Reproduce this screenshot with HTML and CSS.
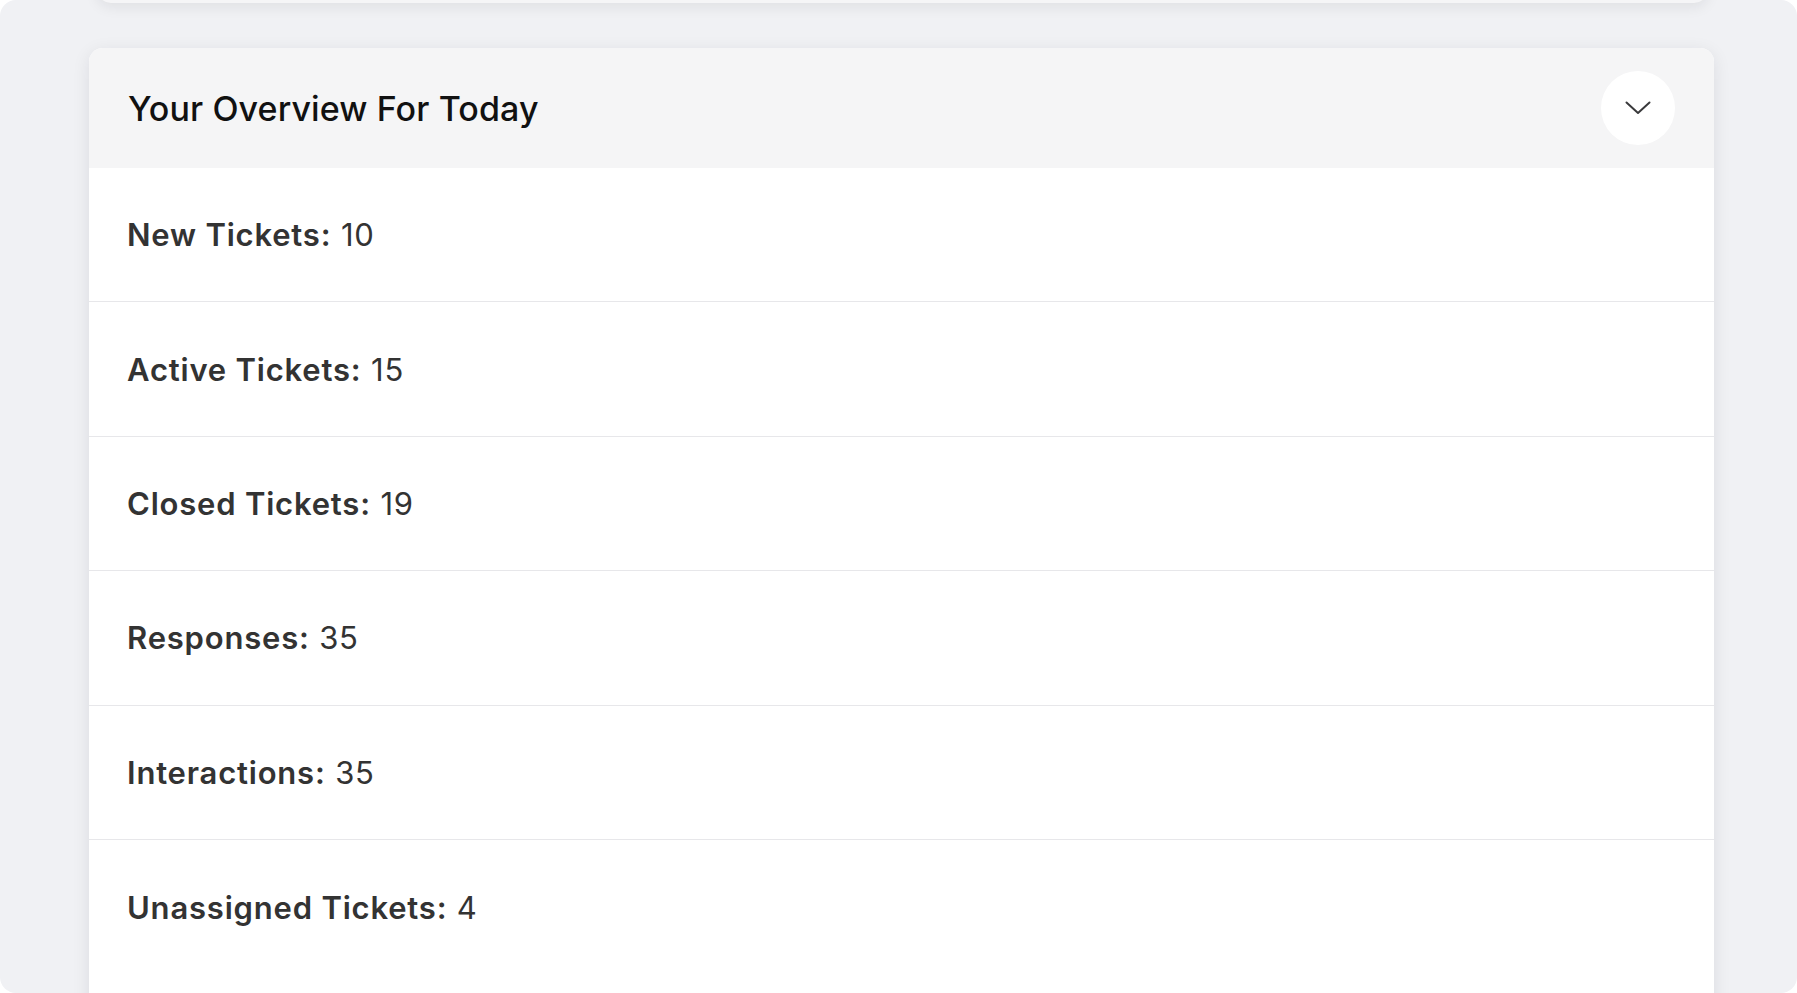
FILE: index.html
```html
<!DOCTYPE html>
<html lang="en">

<head>
    <meta charset="UTF-8">
    <meta name="viewport" content="width=device-width, initial-scale=1.0">
    <title>Overview</title>
    <link rel="stylesheet" href="styles.css">
</head>

<body>
    <div class="page">
        <div class="prev-card"></div>

        <section class="overview-card">
            <div class="overview-header">
                <h2>Your Overview For Today</h2>
                <button class="toggle-btn" type="button" aria-label="Collapse">
                    <svg width="26" height="14" viewBox="0 0 26 14" fill="none">
                        <path d="M1.5 1.5 L13 12 L24.5 1.5" stroke="#3a3a3c" stroke-width="2" stroke-linecap="round" stroke-linejoin="round" />
                    </svg>
                </button>
            </div>
            <ul class="stats-list">
                <li class="stat-row"><strong>New Tickets:</strong> 10</li>
                <li class="stat-row"><strong>Active Tickets:</strong> 15</li>
                <li class="stat-row"><strong>Closed Tickets:</strong> 19</li>
                <li class="stat-row"><strong>Responses:</strong> 35</li>
                <li class="stat-row"><strong>Interactions:</strong> 35</li>
                <li class="stat-row"><strong>Unassigned Tickets:</strong> 4</li>
            </ul>
        </section>
    </div>
</body>

</html>
```

FILE: styles.css
```css
/* Page */
body {
    margin: 0;
    background: #ffffff;
    font-family: 'Inter', 'Noto Sans', sans-serif;
}

.page {
    height: 100vh;
    background: #f0f1f4;
    border-radius: 16px;
    overflow: hidden;
    padding: 0 83px 0 89px;
    box-sizing: border-box;
}

/* Card peeking from above */
.prev-card {
    height: 100px;
    margin: -97px 6px 0 8px;
    background: #f5f5f7;
    border-radius: 14px;
    box-shadow: 0 4px 14px rgba(20, 20, 40, 0.08);
}

/* Overview Card */
.overview-card {
    margin-top: 45px;
    background: #ffffff;
    border-radius: 14px;
    box-shadow: 0 4px 18px rgba(20, 20, 40, 0.09);
    overflow: hidden;
}

.overview-header {
    height: 120px;
    padding: 0 39px;
    background: #f5f5f6;
    display: flex;
    align-items: center;
    justify-content: space-between;
}

.overview-header h2 {
    margin: 0;
    font-size: 34px;
    font-weight: 500;
    color: #111111;
    letter-spacing: 0.1px;
}

.toggle-btn {
    width: 74px;
    height: 74px;
    border: none;
    border-radius: 50%;
    background: #ffffff;
    display: flex;
    align-items: center;
    justify-content: center;
    padding: 0;
    cursor: pointer;
}

/* Stats */
.stats-list {
    list-style: none;
    margin: 0;
    padding: 0 0 80px;
}

.stat-row {
    height: 134.4px;
    box-sizing: border-box;
    padding: 0 38px;
    display: flex;
    align-items: center;
    white-space: pre;
    font-size: 31px;
    letter-spacing: 0.8px;
    color: #333333;
    border-bottom: 1px solid #e7e7ea;
}

.stat-row:last-child {
    border-bottom: none;
}

.stat-row strong {
    font-weight: 600;
}
```
